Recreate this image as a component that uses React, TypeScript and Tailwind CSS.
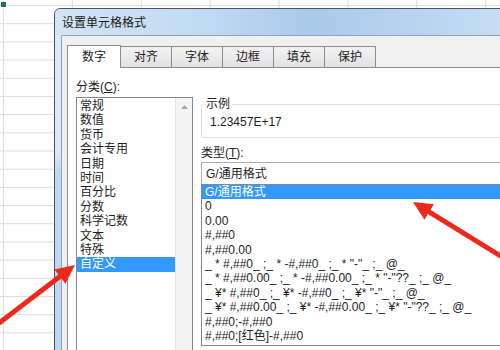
import React from "react";

const catItems = ["常规", "数值", "货币", "会计专用", "日期", "时间", "百分比", "分数", "科学记数", "文本", "特殊", "自定义"];
const typeItems = [
  "G/通用格式",
  "0",
  "0.00",
  "#,##0",
  "#,##0.00",
  '_ * #,##0_ ;_ * -#,##0_ ;_ * "-"_ ;_ @_',
  '_ * #,##0.00_ ;_ * -#,##0.00_ ;_ * "-"??_ ;_ @_',
  '_ ¥* #,##0_ ;_ ¥* -#,##0_ ;_ ¥* "-"_ ;_ @_',
  '_ ¥* #,##0.00_ ;_ ¥* -#,##0.00_ ;_ ¥* "-"??_ ;_ @_',
  "#,##0;-#,##0",
  "#,##0;[红色]-#,##0",
];
const tabs = ["对齐", "字体", "边框", "填充", "保护"];

function Arrow({ x1, y1, x2, y2 }: { x1: number; y1: number; x2: number; y2: number }) {
  const dx = x2 - x1;
  const dy = y2 - y1;
  const len = Math.hypot(dx, dy);
  const ux = dx / len;
  const uy = dy / len;
  const hl = 19;
  const hw = 9;
  const bx = x2 - ux * hl;
  const by = y2 - uy * hl;
  const px = -uy;
  const py = ux;
  return (
    <g>
      <line x1={x1} y1={y1} x2={bx + ux * 2} y2={by + uy * 2} stroke="#ec2a1c" strokeWidth={5} />
      <polygon
        points={`${x2},${y2} ${bx + px * hw},${by + py * hw} ${bx - px * hw},${by - py * hw}`}
        fill="#ec2a1c"
      />
    </g>
  );
}

export default function App() {
  return (
    <div className="relative w-[500px] h-[350px] overflow-hidden bg-white font-['Liberation_Sans','Noto_Sans_CJK_SC',sans-serif] text-[12px] text-[#1e1e1e]">
      {/* spreadsheet background */}
      <div className="absolute inset-0 bg-[linear-gradient(to_bottom,#dadcdf_1px,transparent_1px),linear-gradient(to_right,#dadcdf_1px,transparent_1px)] bg-[length:100%_18.2px,68.9px_100%] bg-[position:0_5px,3px_0]" />
      <div className="absolute left-[1px] top-[2px] w-[5px] h-[5px] bg-[#217346]" />

      {/* dialog window */}
      <div className="absolute left-[54px] top-[8px] w-[470px] h-[360px] rounded-tl-[6px] border border-[#4a5464] bg-[linear-gradient(to_bottom,#dde9f6_0%,#dde9f6_40%,#c0d9f1_45%,#bcd6ef_100%)] pl-[6px] flex flex-col">
        <div className="h-[26px] -ml-[6px] pl-[7px] flex items-center rounded-tl-[6px] bg-[linear-gradient(to_right,#d3e4f5_0%,#c2dbf3_30%,#a9c9ea_55%,#b7d3f0_75%,#c9def4_100%)]">
          <span className="text-[12px] text-[#1a1a1a] leading-none mt-[1px]">设置单元格格式</span>
        </div>
        <div className="flex-1 border-l border-t border-[#8ea3bc] bg-[#f0f0f0] pl-[5px] pt-[9px] flex flex-col">
          {/* tabs */}
          <div className="flex items-end h-[22px] relative z-10">
            <div className="w-[54px] h-[23px] -mb-px border border-b-0 border-[#898c95] bg-white flex items-center justify-center">
              数字
            </div>
            {tabs.map((t) => (
              <div
                key={t}
                className="w-[51px] h-[21px] border-t border-r border-[#898c95] bg-[linear-gradient(to_bottom,#f3f3f3,#e2e2e2)] flex items-center justify-center"
              >
                {t}
              </div>
            ))}
          </div>
          {/* panel */}
          <div className="flex-1 border-l border-t border-[#898c95] bg-white flex pl-[8px]">
            {/* category column */}
            <div className="flex flex-col pt-[12px] w-[117px]">
              <div className="h-[14px] leading-[14px]">
                分类(<span className="underline">C</span>):
              </div>
              <div className="mt-[3px] h-[270px] border border-[#828790] flex">
                <div className="flex-1 flex flex-col pt-px">
                  {catItems.map((c) => (
                    <div
                      key={c}
                      className={`h-[14.4px] leading-[14.4px] pl-[3px] ${c === "自定义" ? "bg-[#3399ff] text-white" : ""}`}
                    >
                      {c}
                    </div>
                  ))}
                </div>
                <div className="w-[17px] border-l border-[#e3e3e3] bg-[#f4f4f4] flex justify-center pt-[7px]">
                  <svg width="7" height="4" viewBox="0 0 7 4">
                    <path d="M0 4 L3.5 0 L7 4 Z" fill="#a8a8a8" />
                  </svg>
                </div>
              </div>
            </div>
            {/* right column */}
            <div className="ml-[8px] w-[320px] flex flex-col pt-[29px]">
              <fieldset className="border border-[#d5dfe5] rounded-[3px] h-[41px] pl-[2px]">
                <legend className="px-[2px] leading-[14px] h-[14px]">示例</legend>
                <div className="leading-[14px] mt-[4px] pl-[6px]">1.23457E+17</div>
              </fieldset>
              <div className="mt-[8px] h-[14px] leading-[14px]">
                类型(<span className="underline">T</span>):
              </div>
              <div className="mt-[2px] h-[23px] border border-[#abadb3] flex items-center pl-[4px]">G/通用格式</div>
              <div className="-mt-px h-[162px] border border-[#828790] flex flex-col">
                {typeItems.map((t, i) => (
                  <div
                    key={t}
                    className={`h-[14.4px] leading-[14.4px] pl-[3px] whitespace-pre ${i === 0 ? "bg-[#3399ff] text-white" : ""}`}
                  >
                    {t}
                  </div>
                ))}
              </div>
            </div>
          </div>
        </div>
      </div>

      {/* red arrows */}
      <svg className="absolute inset-0 pointer-events-none" width="500" height="350">
        <Arrow x1={-6} y1={327} x2={75} y2={265} />
        <Arrow x1={520} y1={268} x2={413} y2={202} />
      </svg>
    </div>
  );
}
